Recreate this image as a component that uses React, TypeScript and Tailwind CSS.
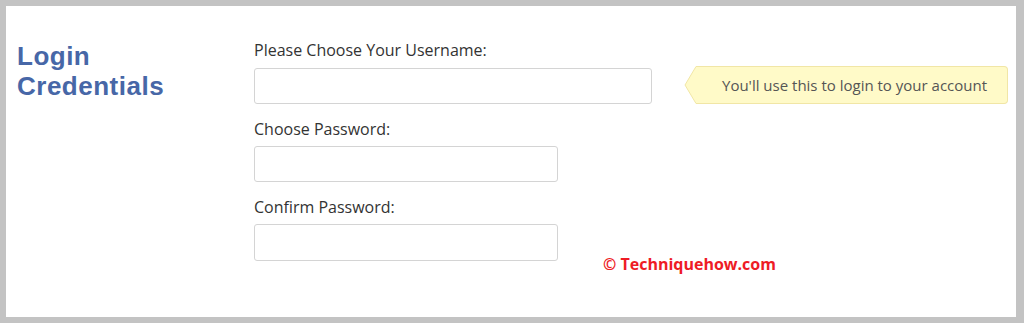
export default function App() {
  return (
    <div className="h-[323px] w-[1024px] bg-[#c3c3c3] pt-[6px] pb-[6px] pl-[6px] pr-[8px] font-['Open_Sans','Liberation_Sans',sans-serif]">
      <div className="relative flex h-full bg-white">
        <div className="w-[248px] shrink-0 pl-[11px] pt-[35px]">
          <h2 className="font-['Liberation_Sans',Arial,sans-serif] text-[26px] font-bold leading-[30px] tracking-[0.5px] text-[#4767a7]">
            Login
            <br />
            Credentials
          </h2>
        </div>

        <div className="flex flex-col pt-[33px]">
          <label className="text-[16px] leading-[22px] text-[#333]">Please Choose Your Username:</label>
          <div className="mt-[7px] flex items-start">
            <input className="h-[36px] w-[398px] rounded-[3px] border border-[#d4d4d4] bg-white" />
            <div className="-mt-[2px] ml-[32px] flex h-[38px] items-stretch">
              <svg width="19" height="38" viewBox="0 0 19 38" className="-mr-px shrink-0">
                <polygon points="19,0.5 12,0.5 1,19 12,37.5 19,37.5" fill="#fffac8" stroke="#f1e6a6" strokeWidth="1" />
              </svg>
              <div className="flex items-center rounded-r-[4px] border-y border-r border-[#f1e6a6] bg-[#fffac8] pl-[20px] pr-[20px] text-[15px] text-[#555]">
                You&apos;ll use this to login to your account
              </div>
            </div>
          </div>

          <label className="mt-[14px] text-[16px] leading-[22px] text-[#333]">Choose Password:</label>
          <input className="mt-[6px] h-[36px] w-[304px] rounded-[3px] border border-[#d4d4d4] bg-white" />

          <label className="mt-[14px] text-[16px] leading-[22px] text-[#333]">Confirm Password:</label>
          <input className="mt-[6px] h-[37px] w-[304px] rounded-[3px] border border-[#d4d4d4] bg-white" />
        </div>

        <span className="absolute left-[597px] top-[246px] text-[16px] font-bold text-[#ee1c25]">
          © Techniquehow.com
        </span>
      </div>
    </div>
  );
}
